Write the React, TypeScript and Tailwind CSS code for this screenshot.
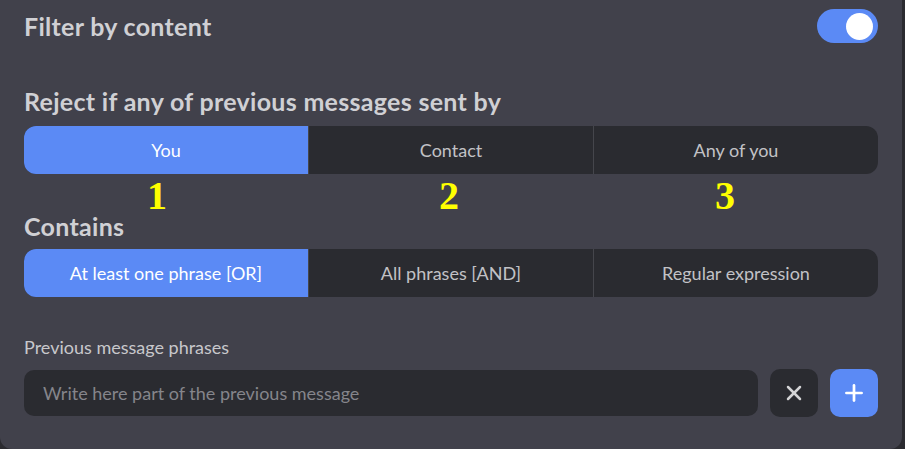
import { X, Plus } from 'lucide-react';

const senders = ['You', 'Contact', 'Any of you'];
const modes = ['At least one phrase [OR]', 'All phrases [AND]', 'Regular expression'];
const marks = [
  { n: '1', cls: 'pr-[26px]' },
  { n: '2', cls: 'pr-[10px]' },
  { n: '3', cls: 'pr-[20px]' },
];

function Segmented({ items, active }: { items: string[]; active: number }) {
  return (
    <div className="flex h-12 rounded-xl overflow-hidden bg-[#2a2b30]">
      {items.map((label, i) => (
        <button
          key={label}
          className={`flex-1 flex items-center justify-center text-[18px] ${
            i === active ? 'bg-[#5b8af5] text-white' : 'text-[#c2c2c6]'
          } ${i > 0 ? 'border-l border-[#45464c]' : ''}`}
        >
          {label}
        </button>
      ))}
    </div>
  );
}

export default function App() {
  return (
    <div className="w-[905px] h-[449px] bg-[#2b2b30]" style={{ fontFamily: 'Lato, "Open Sans", sans-serif' }}>
      <div className="w-[902px] h-full bg-[#41414b] rounded-b-[12px] px-6">
        {/* Header */}
        <div className="flex items-center justify-between h-[34px] translate-y-[9px]">
          <h2 className="text-[25px] leading-[26px] font-bold tracking-[0.3px] text-[#d0d0d4]">Filter by content</h2>
          <div className="w-[61px] h-[34px] rounded-full bg-[#5b8af5] flex items-center justify-end pr-[5px]">
            <div className="w-[27px] h-[27px] rounded-full bg-white" />
          </div>
        </div>

        <h3 className="mt-[54px] text-[25px] leading-[26px] font-bold tracking-[0.3px] text-[#d0d0d4]">
          Reject if any of previous messages sent by
        </h3>
        <div className="mt-3">
          <Segmented items={senders} active={0} />
        </div>

        {/* annotation numbers */}
        <div className="flex pt-[5px]">
          {marks.map((m) => (
            <div
              key={m.n}
              className={`flex-1 text-center text-[40px] leading-[34px] font-bold text-[#ffff00] ${m.cls}`}
              style={{ fontFamily: '"Liberation Serif", serif' }}
            >
              {m.n}
            </div>
          ))}
        </div>

        <h3 className="text-[25px] leading-[26px] font-bold tracking-[0.3px] text-[#d0d0d4]">Contains</h3>
        <div className="mt-[10px]">
          <Segmented items={modes} active={0} />
        </div>

        <div className="mt-[40px] text-[18px] leading-[20px] text-[#c8c8cc]">Previous message phrases</div>
        <div className="mt-3 flex items-center gap-3">
          <input
            className="flex-1 h-[46px] rounded-[10px] bg-[#2a2b30] px-[19px] text-[18px] text-[#c8c8cc] placeholder:text-[#85858b] outline-none"
            placeholder="Write here part of the previous message"
          />
          <button className="w-12 h-12 rounded-[10px] bg-[#2a2b30] flex items-center justify-center text-[#d4d4d6]">
            <X size={24} strokeWidth={2.5} />
          </button>
          <button className="w-12 h-12 rounded-[10px] bg-[#5b8af5] flex items-center justify-center text-white">
            <Plus size={26} strokeWidth={2.5} />
          </button>
        </div>
      </div>
    </div>
  );
}
